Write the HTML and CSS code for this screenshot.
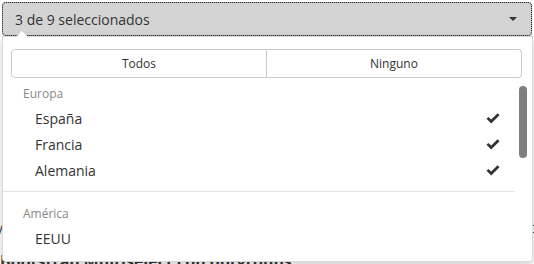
FILE: index.html
```html
<!DOCTYPE html>
<html lang="es">
<head>
    <meta charset="UTF-8">
    <title>Selector múltiple</title>
    <link rel="stylesheet" href="styles.css">
</head>
<body>
    <div class="page">
        <div class="behind">
            <div class="behind-bar"></div>
            <p class="behind-y">y</p>
            <p class="behind-t">t</p>
            <p class="behind-title">Bootstrap Multiselect con optgroups</p>
        </div>

        <div class="select">
            <button class="select-btn">
                <span>3 de 9 seleccionados</span>
                <span class="caret"></span>
            </button>

            <div class="menu">
                <div class="actions">
                    <button class="action">Todos</button>
                    <button class="action">Ninguno</button>
                </div>
                <div class="list">
                    <div class="group">Europa</div>
                    <div class="item">España <svg class="check" viewBox="0 0 14 11"><path d="M0.5 5.8 L2.4 3.9 L5.2 6.6 L11.6 0.3 L13.5 2.2 L5.2 10.4 Z"/></svg></div>
                    <div class="item">Francia <svg class="check" viewBox="0 0 14 11"><path d="M0.5 5.8 L2.4 3.9 L5.2 6.6 L11.6 0.3 L13.5 2.2 L5.2 10.4 Z"/></svg></div>
                    <div class="item">Alemania <svg class="check" viewBox="0 0 14 11"><path d="M0.5 5.8 L2.4 3.9 L5.2 6.6 L11.6 0.3 L13.5 2.2 L5.2 10.4 Z"/></svg></div>
                    <div class="divider"></div>
                    <div class="group">América</div>
                    <div class="item">EEUU</div>
                    <div class="scrollbar"></div>
                </div>
            </div>
        </div>
    </div>
</body>
</html>
```

FILE: styles.css
```css
body {
    margin: 0;
    font-family: "Open Sans", "Liberation Sans", sans-serif;
    color: #333;
    background: #fff;
}

.page {
    position: relative;
    width: 534px;
    height: 264px;
    overflow: hidden;
}

.behind-bar {
    position: absolute;
    left: 2px;
    top: 140px;
    width: 2px;
    height: 36px;
    background: #3a4a6b;
}

.behind-y,
.behind-t,
.behind-title {
    position: absolute;
    margin: 0;
    font-size: 14px;
    color: #333;
}

.behind-y { left: -4px; top: 218px; }
.behind-t { left: 530px; top: 218px; }
.behind-title { left: 0; top: 250px; font-weight: bold; font-size: 16px; }

.select {
    position: relative;
    padding: 2px 2px 0 2px;
}

.select-btn {
    display: flex;
    align-items: center;
    justify-content: space-between;
    width: 530px;
    height: 34px;
    padding: 0 14px 0 12px;
    font-family: inherit;
    font-size: 14px;
    color: #333;
    background: #d4d4d4;
    border: 1px solid #adadad;
    border-radius: 4px;
    outline: 1px dotted #222;
    outline-offset: -1px;
    box-sizing: border-box;
}

.caret {
    width: 0;
    height: 0;
    border-top: 4px solid #333;
    border-left: 4px solid transparent;
    border-right: 4px solid transparent;
}

.menu {
    position: absolute;
    top: 36px;
    left: 2px;
    width: 531px;
    height: 226px;
    background: #fff;
    border: 1px solid rgba(0, 0, 0, 0.15);
    border-radius: 0 0 4px 4px;
    box-shadow: 0 4px 10px rgba(0, 0, 0, 0.18);
    box-sizing: border-box;
}

.menu:before {
    content: '';
    position: absolute;
    top: -6px;
    left: 13px;
    border-bottom: 6px solid #fff;
    border-left: 6px solid transparent;
    border-right: 6px solid transparent;
}

.actions {
    display: flex;
    margin: 12px 10px 0 8px;
}

.action {
    flex: 1;
    height: 29px;
    font-family: inherit;
    font-size: 12px;
    color: #333;
    background: #fff;
    border: 1px solid #ccc;
}

.action:first-child {
    border-radius: 4px 0 0 4px;
}

.action:last-child {
    border-left: none;
    border-radius: 0 4px 4px 0;
}

.list {
    position: relative;
    padding-top: 5px;
}

.group {
    padding: 0 0 0 20px;
    height: 22px;
    line-height: 22px;
    font-size: 12px;
    color: #888;
}

.item {
    display: flex;
    align-items: center;
    justify-content: space-between;
    height: 26px;
    padding: 0 32px 0 32px;
    font-size: 14px;
    color: #333;
}

.check {
    width: 14px;
    height: 11px;
    fill: #333;
}

.divider {
    height: 1px;
    margin: 8px 17px 11px 0;
    background: #e5e5e5;
}

.scrollbar {
    position: absolute;
    top: 8px;
    right: 5px;
    width: 8px;
    height: 72px;
    border-radius: 4px;
    background: #7f7f7f;
}
```
